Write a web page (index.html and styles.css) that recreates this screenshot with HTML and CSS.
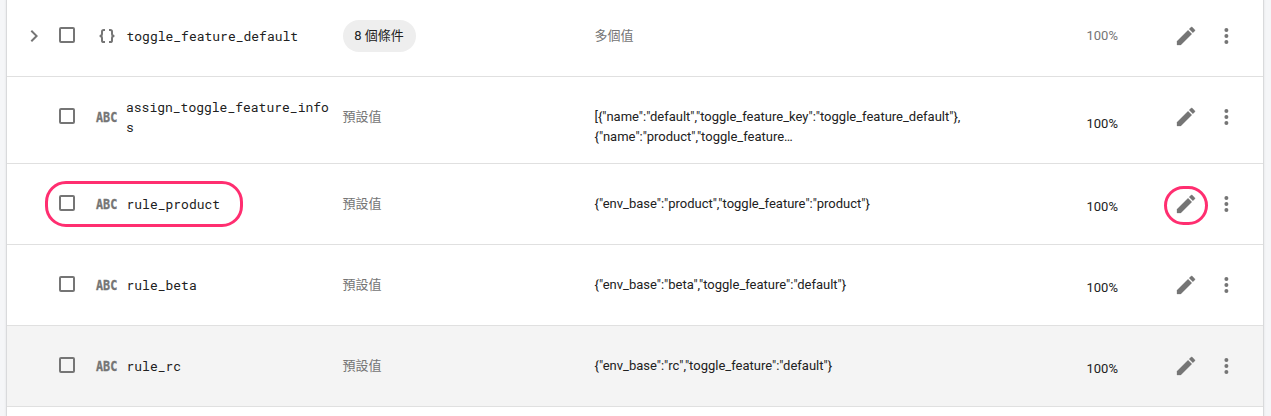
FILE: index.html
```html
<!DOCTYPE html>
<html lang="zh-Hant">
<head>
<meta charset="utf-8">
<title>Parameters</title>
<link rel="stylesheet" href="styles.css">
</head>
<body>
<svg class="defs" aria-hidden="true">
  <symbol id="edit" viewBox="0 0 24 24"><path d="M3 17.25V21h3.75L17.81 9.94l-3.75-3.75L3 17.25zM20.71 7.04a1 1 0 0 0 0-1.41l-2.34-2.34a1 1 0 0 0-1.41 0l-1.83 1.83 3.75 3.75 1.83-1.83z"/></symbol>
  <symbol id="more" viewBox="0 0 24 24"><circle cx="12.4" cy="6" r="2"/><circle cx="12.4" cy="12" r="2"/><circle cx="12.4" cy="18" r="2"/></symbol>
  <symbol id="chevron" viewBox="0 0 24 24"><path d="M8.6 16.6 13.2 12 8.6 7.4 10 6l6 6-6 6z"/></symbol>
  <symbol id="object" viewBox="0 0 24 24"><path class="line" d="M10 5.9H8.7Q7 5.9 7 7.6v2.2Q7 12 4.6 12 7 12 7 14.2v2.2q0 1.7 1.7 1.7H10M14 5.9h1.3Q17 5.9 17 7.6v2.2q0 2.2 2.4 2.2-2.4 0-2.4 2.2v2.2q0 1.7-1.7 1.7H14"/></symbol>
</svg>
<main class="card">
  <div class="row first">
    <svg class="icon chevron"><use href="#chevron"/></svg>
    <span class="check"></span>
    <svg class="icon"><use href="#object"/></svg>
    <span class="name">toggle_feature_default</span>
    <span class="cond"><span class="chip">8 個條件</span></span>
    <span class="value muted">多個值</span>
    <span class="pct muted">100%</span>
    <svg class="icon edit"><use href="#edit"/></svg>
    <svg class="icon"><use href="#more"/></svg>
  </div>
  <div class="row tall">
    <span></span>
    <span class="check"></span>
    <span class="abc">ABC</span>
    <span class="name">assign_toggle_feature_infos</span>
    <span class="cond muted">預設值</span>
    <span class="value">[{"name":"default","toggle_feature_key":"toggle_feature_default"},<br>{"name":"product","toggle_feature…</span>
    <span class="pct">100%</span>
    <svg class="icon edit"><use href="#edit"/></svg>
    <svg class="icon"><use href="#more"/></svg>
  </div>
  <div class="row">
    <span></span>
    <span class="check"></span>
    <span class="abc">ABC</span>
    <span class="name">rule_product</span>
    <span class="cond muted">預設值</span>
    <span class="value">{"env_base":"product","toggle_feature":"product"}</span>
    <span class="pct">100%</span>
    <svg class="icon edit"><use href="#edit"/></svg>
    <svg class="icon"><use href="#more"/></svg>
    <i class="mark mark-name"></i>
    <i class="mark mark-edit"></i>
  </div>
  <div class="row">
    <span></span>
    <span class="check"></span>
    <span class="abc">ABC</span>
    <span class="name">rule_beta</span>
    <span class="cond muted">預設值</span>
    <span class="value">{"env_base":"beta","toggle_feature":"default"}</span>
    <span class="pct">100%</span>
    <svg class="icon edit"><use href="#edit"/></svg>
    <svg class="icon"><use href="#more"/></svg>
  </div>
  <div class="row hover">
    <span></span>
    <span class="check"></span>
    <span class="abc">ABC</span>
    <span class="name">rule_rc</span>
    <span class="cond muted">預設值</span>
    <span class="value">{"env_base":"rc","toggle_feature":"default"}</span>
    <span class="pct">100%</span>
    <svg class="icon edit"><use href="#edit"/></svg>
    <svg class="icon"><use href="#more"/></svg>
  </div>
</main>
</body>
</html>
```

FILE: styles.css
```css
* { box-sizing: border-box; }
body {
  margin: 0;
  height: 416px;
  overflow: hidden;
  background: #f5f6f8;
  color: #212121;
  font: 13px/20px Roboto, "Noto Sans CJK TC", sans-serif;
}
.defs { display: none; }
.card {
  width: 1256px;
  height: 416px;
  margin-left: 7px;
  background: #fff;
  box-shadow: 0 0 0 1px #d9dadc, 0 0 2px 1px #dfe0e3;
}
.row {
  position: relative;
  display: grid;
  grid-template-columns: 33px 40px 31.5px 216px 252px 492px 87.5px 40px 24px;
  align-items: start;
  height: 81px;
  padding: 30px 0 0 15px;
  border-bottom: 1px solid #e0e0e0;
}
.first { height: 77px; padding-top: 26px; }
.tall { height: 87px; }
.hover { background: #f4f4f4; }
.icon {
  width: 24px;
  height: 24px;
  margin-top: -2px;
  fill: #757575;
}
.edit { stroke: #757575; stroke-width: .3; }
.line { fill: none; stroke: #757575; stroke-width: 2; }
.check {
  width: 16px;
  height: 16px;
  margin: 1px 0 0 4px;
  border: 2px solid #757575;
  border-radius: 2px;
}
.abc {
  width: 26px;
  margin-left: 1px;
  color: #757575;
  font: bold 14px/20px "DejaVu Sans Mono", monospace;
  -webkit-text-stroke: .3px #757575;
  transform: scaleX(.84);
  transform-origin: left;
}
.tall .abc { margin-left: .5px; }
.name {
  width: 206px;
  font: 13px/20px "Roboto Mono", "Liberation Mono", monospace;
  overflow-wrap: anywhere;
}
.tall .name { margin: -10px 0 0 -.5px; }
.muted { color: #757575; }
.chip {
  display: block;
  width: 73px;
  height: 32px;
  margin-top: -6px;
  border-radius: 16px;
  background: #eee;
  line-height: 32px;
  text-align: center;
}
.pct { margin-top: 3px; }
.first .pct { margin-top: 0; }
.tall .pct { margin-top: 7px; }
.mark {
  position: absolute;
  border: 3px solid #ff2e70;
}
.mark-name {
  left: 38px;
  top: 17px;
  width: 198px;
  height: 46px;
  border-radius: 21px;
}
.mark-edit {
  left: 1157px;
  top: 22px;
  width: 44px;
  height: 39px;
  border-radius: 20px;
}
```
